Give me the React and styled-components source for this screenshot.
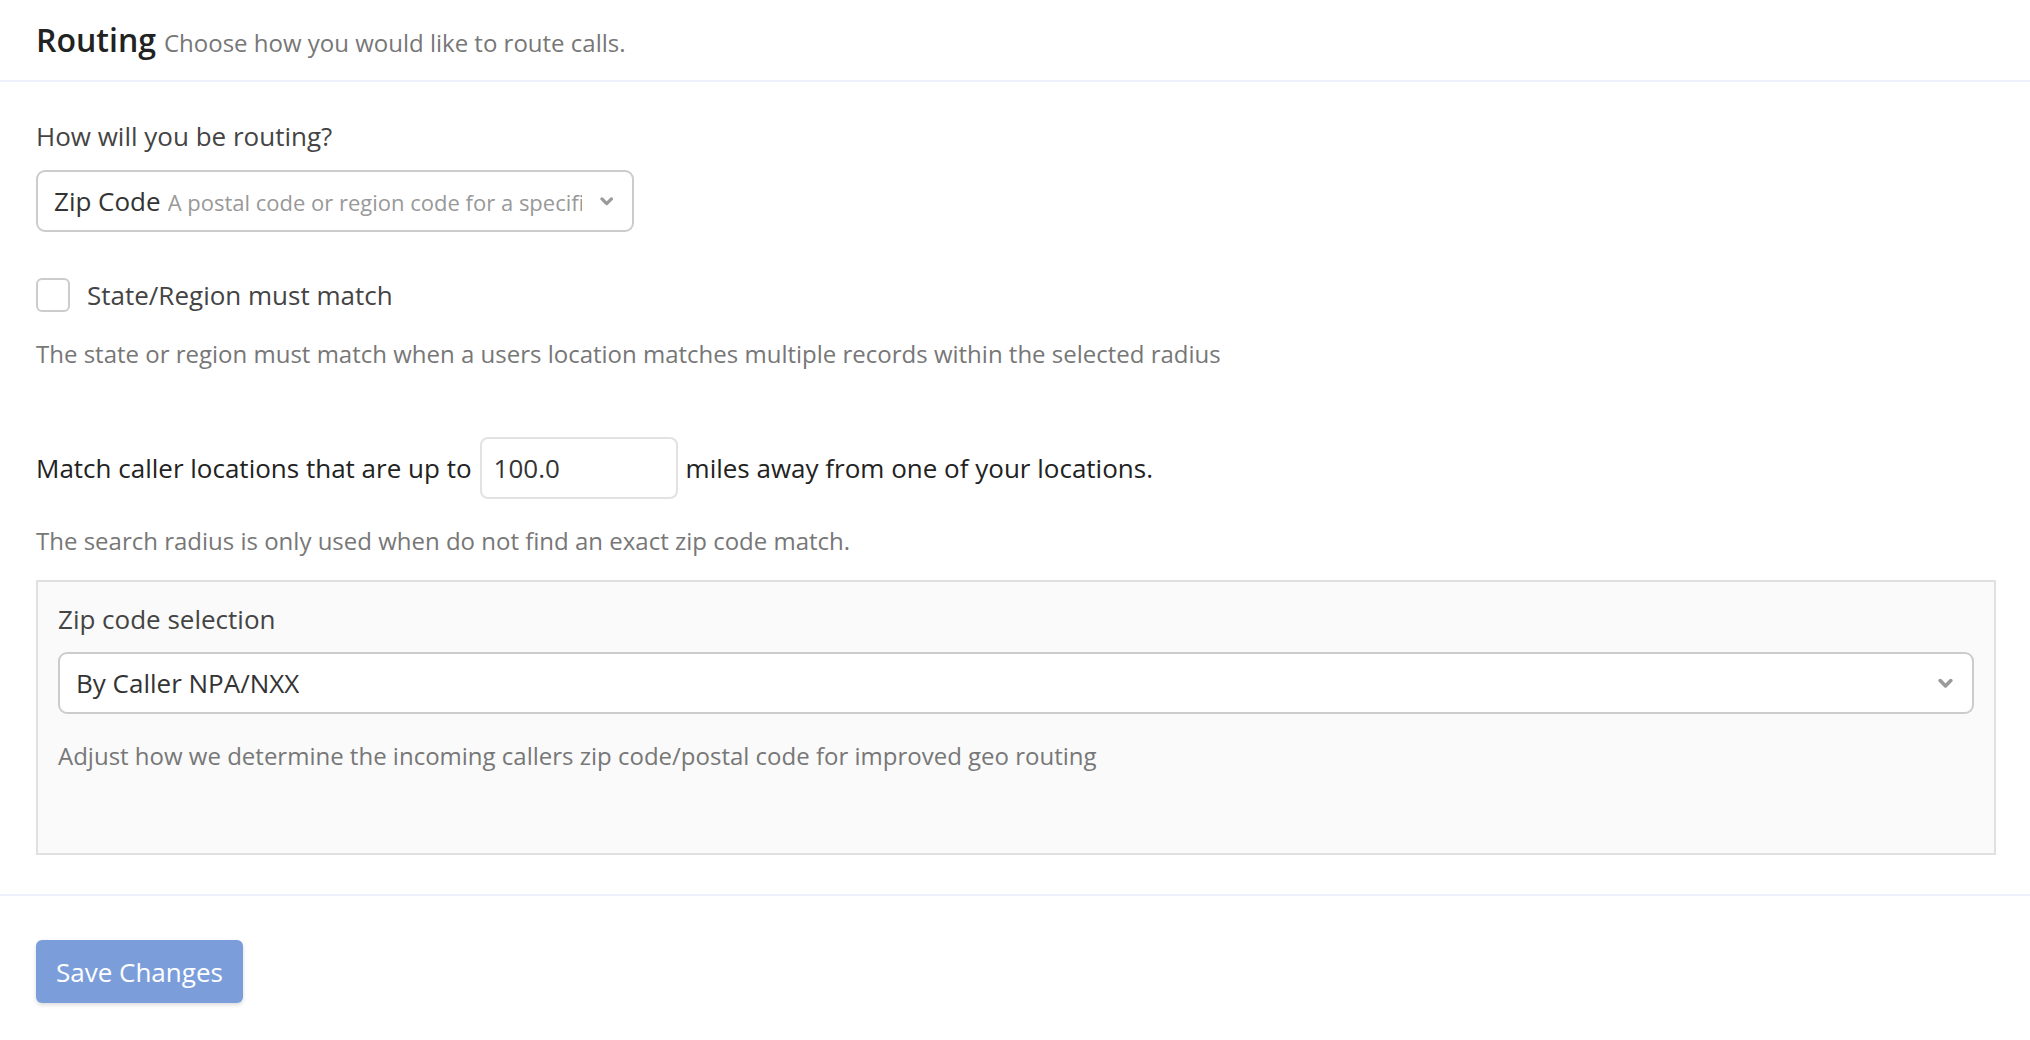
import React, { useState } from 'react';
import styled, { createGlobalStyle } from 'styled-components';

const GlobalStyle = createGlobalStyle`
    body {
        margin: 0;
        background: #fff;
        font-family: "Open Sans", "Noto Sans", sans-serif;
        color: #444;
    }
`

const Chevron = () => (
    <svg width="15" height="11" viewBox="0 0 15 11">
        <path d="M2.2 2.6 L7.5 7.9 L12.8 2.6" fill="none" stroke="#9a9a9a" strokeWidth="3.6" strokeLinecap="round" strokeLinejoin="round" />
    </svg>
)

const App = () => {
    const [radius, setRadius] = useState('100.0');
    const [mustMatch, setMustMatch] = useState(false);

    return (<Page>
        <GlobalStyle />
        <Header>
            <Title>Routing</Title>
            <Subtitle>Choose how you would like to route calls.</Subtitle>
        </Header>
        <Body>
            <Label>How will you be routing?</Label>
            <Select width="598px">
                <SelectText>
                    <strong>Zip Code</strong>
                    <Hint>A postal code or region code for a specific area</Hint>
                </SelectText>
                <Chevron />
            </Select>

            <CheckRow onClick={() => setMustMatch(!mustMatch)}>
                <Box checked={mustMatch} />
                <span>State/Region must match</span>
            </CheckRow>
            <Help>The state or region must match when a users location matches multiple records within the selected radius</Help>

            <RadiusRow>
                <span>Match caller locations that are up to</span>
                <RadiusInput value={radius} onChange={e => setRadius(e.target.value)} />
                <span>miles away from one of your locations.</span>
            </RadiusRow>
            <Help>The search radius is only used when do not find an exact zip code match.</Help>

            <Panel>
                <Label>Zip code selection</Label>
                <Select>
                    <SelectText>
                        <strong>By Caller NPA/NXX</strong>
                    </SelectText>
                    <Chevron />
                </Select>
                <Help>Adjust how we determine the incoming callers zip code/postal code for improved geo routing</Help>
            </Panel>
        </Body>
        <Footer>
            <SaveButton>Save Changes</SaveButton>
        </Footer>
    </Page>);
}

export default App;


const Page = styled.div`
    width: 100%;
`

const Header = styled.div`
    display: flex;
    align-items: baseline;
    gap: 8px;
    padding: 20px 36px 17px;
    border-bottom: 2px solid #eef1fc;
`

const Title = styled.h1`
    margin: 0;
    font-size: 32px;
    line-height: 40px;
    font-weight: 600;
    color: #222;
`

const Subtitle = styled.span`
    font-size: 24px;
    line-height: 40px;
    color: #777;
`

const Body = styled.div`
    padding: 38px 34px 39px 36px;
`

const Label = styled.div`
    font-size: 26px;
    line-height: 32px;
    color: #444;
    margin-bottom: 18px;
`

const Select = styled.div`
    display: flex;
    align-items: center;
    justify-content: space-between;
    box-sizing: border-box;
    width: ${props => props.width || '100%'};
    height: 62px;
    padding: 0 19px 0 16px;
    background: #fff;
    border: 2px solid #ccc;
    border-radius: 9px;
`

const SelectText = styled.div`
    display: flex;
    align-items: baseline;
    gap: 7px;
    overflow: hidden;
    white-space: nowrap;
    margin-right: 18px;

    strong {
        font-weight: 400;
        font-size: 26px;
        color: #333;
    }
`

const Hint = styled.span`
    font-size: 22px;
    color: #999;
    overflow: hidden;
`

const CheckRow = styled.label`
    display: flex;
    align-items: center;
    gap: 17px;
    margin-top: 46px;
    font-size: 26px;
    line-height: 34px;
    color: #444;
    cursor: pointer;
`

const Box = styled.span`
    width: 34px;
    height: 34px;
    box-sizing: border-box;
    border: 2px solid #ccc;
    border-radius: 6px;
    background: ${props => props.checked ? '#7b9edb' : '#fff'};
`

const Help = styled.p`
    margin: 26px 0 0;
    font-size: 24px;
    line-height: 32px;
    color: #777;
`

const RadiusRow = styled.div`
    display: flex;
    align-items: center;
    gap: 8px;
    margin-top: 67px;
    font-size: 26px;
    color: #222;
`

const RadiusInput = styled.input`
    box-sizing: border-box;
    width: 198px;
    height: 62px;
    padding: 0 12px;
    border: 2px solid #e2e2e2;
    border-radius: 8px;
    font-family: inherit;
    font-size: 26px;
    color: #333;
    outline: none;
`

const Panel = styled.div`
    margin-top: 23px;
    padding: 21px 20px 81px;
    background: #fafafa;
    border: 2px solid #e0e0e0;

    ${Label} {
        margin-bottom: 17px;
    }
`

const Footer = styled.div`
    padding: 44px 36px 40px;
    border-top: 2px solid #eef1fc;
`

const SaveButton = styled.button`
    height: 63px;
    padding: 0 20px;
    border: none;
    border-radius: 6px;
    background: #7b9edb;
    box-shadow: 0 2px 4px rgba(0, 0, 0, 0.15);
    color: #fff;
    font-family: inherit;
    font-size: 26px;
    cursor: pointer;
`
